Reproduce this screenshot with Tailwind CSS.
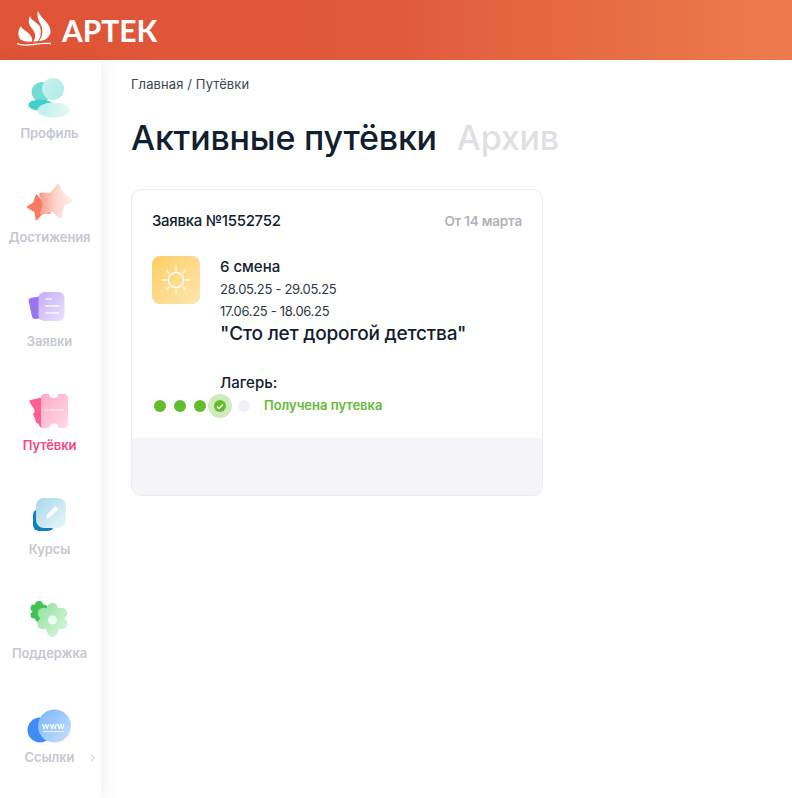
<!DOCTYPE html>
<html lang="ru">
<head>
<meta charset="utf-8">
<script src="https://cdn.jsdelivr.net/npm/@tailwindcss/browser@4"></script>
</head>
<body class="bg-white font-['Inter','Noto_Sans',sans-serif] text-[#10202e] overflow-hidden">
<div class="w-[792px] h-[798px] flex flex-col overflow-hidden">
  <header class="h-[60px] shrink-0 flex items-center pl-[17px] bg-gradient-to-r from-[#df5336] via-[#e15a3b] to-[#ec7c4c]">
    <svg width="35" height="36" viewBox="0 0 35 36" class="mt-[-2px] shrink-0">
      <path fill="#fff" d="M21 0C19 7 23 11 25 17C26 22 25 26 22 30C28 30 33.500 26 33.500 20C33.500 12 24 8 21 0Z"/>
      <path fill="#fff" d="M13 5C10 11 13 15 16 19C19 23 19 27 16 30.500C18 30.500 20 30.500 21 30C24 26 24.500 21 23 16C21 11 14 10 13 5Z"/>
      <path fill="#fff" d="M4 15C0.500 20 0.500 25 3.500 28.500C7 30.500 11 31 15 30.500C16 25 11 21.500 8 19.500C6 18 4.500 17 4 15Z"/>
      <path fill="none" stroke="#fff" stroke-width="1.300" d="M0 32.500C6 35.500 10 33.500 16 33.500C22 32.500 28 32 34 32.500"/>
    </svg>
    <span class="ml-[10px] text-[30px] leading-none font-['Lato'] font-bold text-white">АРТЕК</span>
  </header>
  <div class="flex flex-1 min-h-0">
    <aside class="w-[101px] shrink-0 bg-white shadow-[4px_0_16px_rgba(0,0,0,0.06)] flex flex-col pt-[15px] text-[13px] font-semibold tracking-[-0.1px] text-[#c6c7d3]">
      <a class="h-[104px] shrink-0 flex flex-col items-center">
        <svg width="50" height="46" viewBox="0 0 50 46" class="blur-[0.4px]">
          <defs>
            <linearGradient id="p1" x1="0" y1="0" x2="1" y2="1"><stop offset="0" stop-color="#c9f3f0"/><stop offset="1" stop-color="#aeeae8"/></linearGradient>
            <linearGradient id="p2" x1="0" y1="0" x2="1" y2="0"><stop offset="0" stop-color="#baf0ec"/><stop offset="1" stop-color="#e2f8f7"/></linearGradient>
          </defs>
          <circle cx="15.500" cy="17" r="10" fill="#6fdcd8"/>
          <ellipse cx="14.500" cy="30" rx="12" ry="5.500" fill="#3fd0cc"/>
          <circle cx="27" cy="14" r="11" fill="url(#p1)"/>
          <ellipse cx="27.500" cy="35" rx="16" ry="7.500" fill="url(#p2)"/>
        </svg>
        <span class="mt-[3px] mr-[2px] leading-[18px]">Профиль</span>
      </a>
      <a class="h-[104px] shrink-0 flex flex-col items-center">
        <svg width="50" height="46" viewBox="0 0 50 46" class="blur-[0.4px]">
          <defs><linearGradient id="s1" x1="0" y1="0.5" x2="1" y2="0.5"><stop offset="0" stop-color="#fa9f8e"/><stop offset="0.5" stop-color="#fcd5cc"/><stop offset="1" stop-color="#fdeeea"/></linearGradient></defs>
          <path fill="#f67c68" stroke="#f67c68" stroke-width="1.500" stroke-linejoin="round" d="M1.500 28L8 23.500L10.500 16L15 22L23 24L18 30L24 34L17 33.500L10.500 40.500L9 32.500Z"/>
          <path fill="url(#s1)" stroke="url(#s1)" stroke-width="2.500" stroke-linejoin="round" d="M32 6L37 15.500L45.500 21.500L37 25.500L34.500 38L26 31L15 35L18 25L14.500 15L25 15Z"/>
        </svg>
        <span class="mt-[3px] mr-[2px] leading-[18px]">Достижения</span>
      </a>
      <a class="h-[104px] shrink-0 flex flex-col items-center">
        <svg width="50" height="46" viewBox="0 0 50 46" class="blur-[0.4px]">
          <defs><linearGradient id="z1" x1="0" y1="0" x2="1" y2="1"><stop offset="0" stop-color="#c4abf7"/><stop offset="1" stop-color="#ece4fd"/></linearGradient></defs>
          <path fill="#9b74f2" d="M4.500 15L16 13V35L9 36C7 36 6.500 35 6 33.500L2.500 17.500C2.500 16 3.500 15.500 4.500 15Z"/>
          <rect x="12.500" y="9" width="26" height="29" rx="6" fill="url(#z1)"/>
          <g stroke="#fff" stroke-width="1.400" opacity=".85"><path d="M19.500 16H26M19.500 23H33M19.500 30H33"/></g>
        </svg>
        <span class="mt-[3px] mr-[2px] leading-[18px]">Заявки</span>
      </a>
      <a class="h-[104px] shrink-0 flex flex-col items-center text-[#f9457f]">
        <svg width="50" height="46" viewBox="0 0 50 46" class="blur-[0.4px]">
          <defs><linearGradient id="t1" x1="0" y1="0" x2="1" y2="1"><stop offset="0" stop-color="#ffa9c5"/><stop offset="1" stop-color="#ffdbe7"/></linearGradient></defs>
          <path fill="#fd5f90" d="M4.500 13L18 10V41L14 40C13 37 12 36 10.500 36L7 27C9 25 9 24 8 22L3.500 15C3.500 14 3.500 13 4.500 13Z"/>
          <path fill="url(#t1)" d="M15 11C15 9 16 7 18 7H23C23.500 10 25 11 28 11C30.500 11 32 10 32.500 7H38C40.500 7 42 9 42 11V37C42 39.500 40.500 41 38 41H33C32.500 38 30.500 36.500 28 36.500C25.500 36.500 23.500 38 23 41H18C16 41 15 39.500 15 37Z"/>
          <path stroke="#fff" stroke-width="1.500" stroke-dasharray="4 1.500" d="M19.500 23H38" opacity=".75"/>
        </svg>
        <span class="mt-[3px] mr-[2px] leading-[18px]">Путёвки</span>
      </a>
      <a class="h-[104px] shrink-0 flex flex-col items-center">
        <svg width="50" height="46" viewBox="0 0 50 46" class="blur-[0.4px]">
          <defs><linearGradient id="k1" x1="0" y1="0" x2="1" y2="1"><stop offset="0" stop-color="#a5d8ea"/><stop offset="1" stop-color="#eaf8fa"/></linearGradient></defs>
          <rect x="7" y="18" width="21" height="22" rx="6" fill="#1180bf"/>
          <rect x="10" y="7" width="30" height="30" rx="8" fill="url(#k1)"/>
          <path fill="#fff" opacity=".9" d="M20 28L21 23.500L28 16.500C29 15.500 30 15.500 31 16.500C32 17.500 32 18.500 31 19.500L24 26.500Z"/>
        </svg>
        <span class="mt-[3px] mr-[2px] leading-[18px]">Курсы</span>
      </a>
      <a class="h-[104px] shrink-0 flex flex-col items-center">
        <svg width="50" height="46" viewBox="0 0 50 46" class="blur-[0.4px]">
          <defs><linearGradient id="g1" x1="0" y1="0" x2="1" y2="1"><stop offset="0" stop-color="#8ee09a"/><stop offset="1" stop-color="#e0f8e3"/></linearGradient></defs>
          <g fill="#43c257"><circle cx="13" cy="10" r="4"/><circle cx="8" cy="13" r="3.500"/><circle cx="18" cy="13" r="3.500"/><circle cx="8" cy="20" r="3.500"/><circle cx="18" cy="20" r="3.500"/><circle cx="13" cy="23" r="4"/><circle cx="13" cy="16.500" r="6.500"/></g>
          <path fill="url(#g1)" d="M26.500 8C30 8 32 10.500 32 13.500C35 12 39 13 40.500 15.500C42 18.500 41 21.500 38.500 23.500C41.500 25.500 42.500 28.500 41 31.500C39.500 34 36 35 33 33.500C32.500 37 30 42 26.500 42C23 42 20.500 37 20 33.500C17 35 13.500 34 12 31.500C10.500 28.500 11.500 25.500 14.500 23.500C12 21.500 11 18.500 12.500 15.500C14 13 18 12 21 13.500C21 10.500 23 8 26.500 8Z"/>
          <circle cx="26.500" cy="25" r="4.500" fill="#edfbef"/>
        </svg>
        <span class="mt-[3px] mr-[2px] leading-[18px]">Поддержка</span>
      </a>
      <a class="h-[70px] shrink-0 flex flex-col items-center relative">
        <svg width="50" height="46" viewBox="0 0 50 46" class="blur-[0.4px]">
          <defs><linearGradient id="w1" x1="0" y1="0" x2="1" y2="1"><stop offset="0" stop-color="#79b5fa"/><stop offset="1" stop-color="#c9e2fe"/></linearGradient></defs>
          <circle cx="14" cy="31" r="12.500" fill="#3f8df3"/>
          <circle cx="28.500" cy="27" r="16.500" fill="url(#w1)"/>
          <text x="27.500" y="30" text-anchor="middle" font-family="Lato" font-size="9" font-weight="700" fill="#fff" letter-spacing="0.5">www</text>
          <path d="M17 32.500H38" stroke="#fff" stroke-width="0.800"/>
        </svg>
        <span class="mt-[3px] mr-[2px] leading-[18px]">Ссылки</span>
        <svg class="absolute left-[90px] top-[55px]" width="5" height="8" viewBox="0 0 5 8"><path d="M1 .5l3 3.500-3 3.500" fill="none" stroke="#c6c7d3" stroke-width="1"/></svg>
      </a>
    </aside>
    <main class="flex-1 pl-[30px] pt-[15px]">
      <p class="text-[13px] tracking-[0.1px] leading-[18px] text-[#3b4650]">Главная / Путёвки</p>
      <div class="mt-[24px] flex gap-[20px] text-[34px] tracking-[-0.2px] leading-[42px] font-medium">
        <h1 class="text-[#10202e]">Активные путёвки</h1>
        <span class="text-[#dfe0e3]">Архив</span>
      </div>
      <section class="mt-[30px] w-[412px] h-[307px] rounded-[10px] border border-[#ebebf0] overflow-hidden flex flex-col">
        <div class="flex-1 px-[20px] pt-[21px]">
          <div class="flex justify-between items-center h-[20px]">
            <span class="text-[15px] tracking-[-0.3px] font-medium">Заявка №1552752</span>
            <span class="text-[13.500px] tracking-[-0.2px] font-semibold text-[#b2b3ba]">От 14 марта</span>
          </div>
          <div class="mt-[25px] flex gap-[20px]">
            <div class="w-[48px] h-[48px] rounded-[8px] bg-gradient-to-br from-[#fdcf61] to-[#fee5ae] flex items-center justify-center shrink-0">
              <svg width="32" height="32" viewBox="0 0 32 32" fill="none" stroke="#fff" stroke-width="1.400" stroke-linecap="round">
                <circle cx="16" cy="16" r="7.500"/>
                <path d="M16 2.500v4M16 25.500v4M2.500 16h4M25.500 16h4M6.500 6.500l2.500 2.500M23 23l2.500 2.500M6.500 25.500l2.500-2.500M23 9l2.500-2.500"/>
              </svg>
            </div>
            <div class="min-w-0">
              <p class="text-[15px] leading-[22px] font-medium">6 смена</p>
              <p class="text-[13px] tracking-[-0.3px] leading-[22px] text-[#2c3844]">28.05.25 - 29.05.25</p>
              <p class="text-[13px] tracking-[-0.3px] leading-[22px] text-[#2c3844]">17.06.25 - 18.06.25</p>
              <p class="text-[19px] tracking-[-0.2px] leading-[24px] font-medium">"Сто лет дорогой детства"</p>
              <p class="mt-[27px] text-[15px] leading-[20px] font-medium">Лагерь:</p>
            </div>
          </div>
          <div class="flex items-center h-[26px] pl-[2px]">
            <span class="w-[12px] h-[12px] rounded-full bg-[#62bd2e]"></span>
            <span class="ml-[8px] w-[12px] h-[12px] rounded-full bg-[#62bd2e]"></span>
            <span class="ml-[8px] w-[12px] h-[12px] rounded-full bg-[#62bd2e]"></span>
            <span class="ml-[2px] w-[24px] h-[24px] rounded-full bg-[#cfeabf] flex items-center justify-center">
              <span class="w-[12px] h-[12px] rounded-full bg-[#62bd2e] flex items-center justify-center">
                <svg width="8" height="7" viewBox="0 0 8 7"><path d="M1 3.500l2 2 4-4" fill="none" stroke="#fff" stroke-width="1.300"/></svg>
              </span>
            </span>
            <span class="ml-[6px] w-[12px] h-[12px] rounded-full bg-[#f0f0f6]"></span>
            <span class="ml-[14px] text-[13px] font-semibold text-[#67b93a]">Получена путевка</span>
          </div>
        </div>
        <div class="h-[57px] shrink-0 bg-[#f4f4f9]"></div>
      </section>
    </main>
  </div>
</div>
</body>
</html>
